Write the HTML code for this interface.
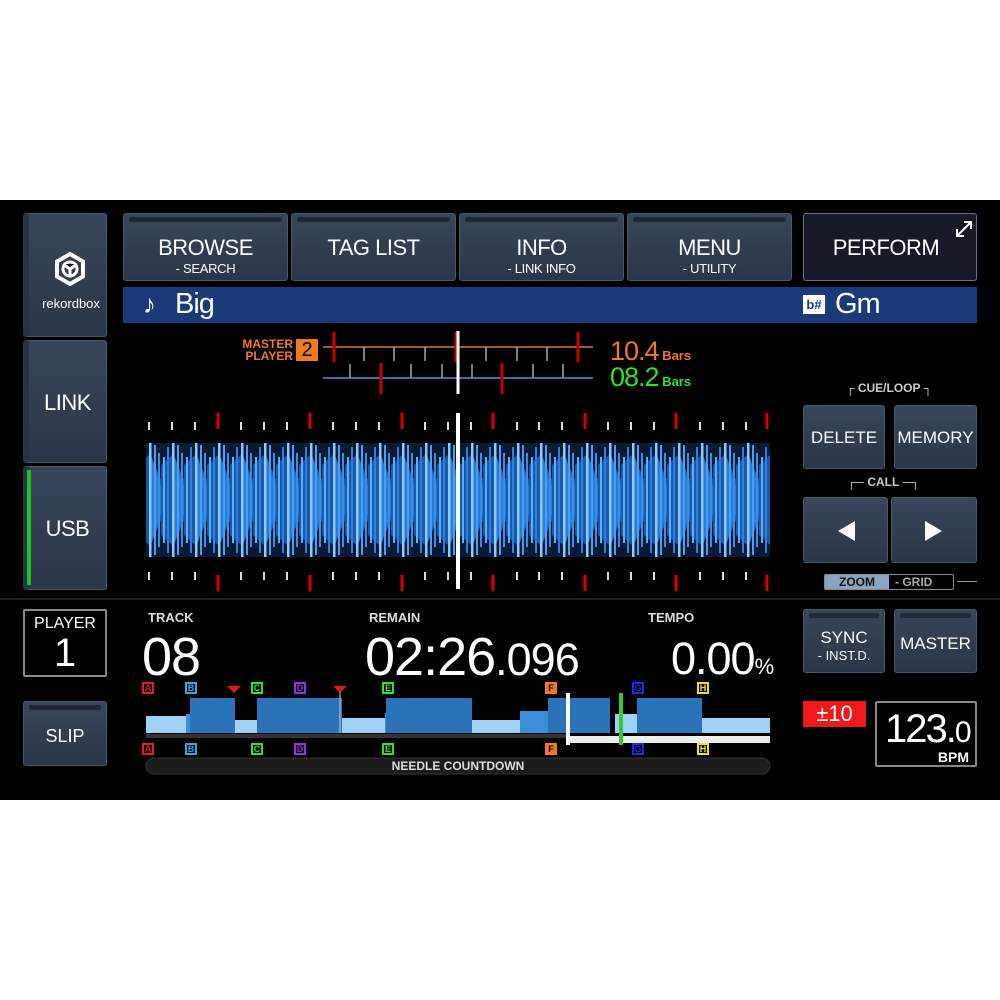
<!DOCTYPE html>
<html><head><meta charset="utf-8">
<style>
*{margin:0;padding:0;box-sizing:border-box}
body{width:1000px;height:1000px;background:#fff;position:relative;overflow:hidden;font-family:"Liberation Sans",sans-serif;color:#fff}
#scr{position:absolute;left:0;top:200px;width:1000px;height:600px;background:#000}
.a{position:absolute}
.btn{position:absolute;background:linear-gradient(#38465b,#2a3649);border:1px solid #4a586c;border-radius:3px;text-align:center;color:#fff}
.btn .hl{position:absolute;left:5px;right:5px;top:3px;height:5px;background:#1e2838;border-radius:2px}
.t{font-size:22px;letter-spacing:-0.5px}
.s{font-size:13px;letter-spacing:-0.3px}
.lbl{position:absolute;font-size:13px;font-weight:bold;color:#ddd}
.big{position:absolute;font-size:54px;font-weight:normal;letter-spacing:-1px;line-height:1}
.mk{position:absolute;width:12px;height:12px;border:2px solid;font-size:9px;font-weight:bold;line-height:8px;text-align:center}
</style></head><body>
<div id="scr"></div>

<div class="btn" style="left:23px;top:213px;width:84px;height:124px;border-left:6px solid #273244">
  <svg class="a" style="left:25px;top:38px" width="32" height="34" viewBox="0 0 32 34"><path d="M16 2 L29 9.5 L29 24.5 L16 32 L3 24.5 L3 9.5 Z" fill="none" stroke="#fff" stroke-width="4"/><circle cx="16" cy="17" r="7" fill="none" stroke="#fff" stroke-width="3"/><path d="M9 12 L16 17 L23 12 M16 17 L16 25" stroke="#fff" stroke-width="3"/></svg>
  <div class="a" style="left:6px;top:82px;width:72px;font-size:13px;text-align:center">rekordbox</div>
</div>
<div class="btn" style="left:23px;top:340px;width:84px;height:123px;border-left:6px solid #273244"><div class="t" style="margin-top:49px">LINK</div></div>
<div class="btn" style="left:23px;top:466px;width:84px;height:124px;border-left:6px solid #273244"><div class="a" style="left:-2px;top:3px;width:4px;height:115px;background:#1ec21e"></div><div class="t" style="margin-top:49px">USB</div></div>

<div class="btn" style="left:123px;top:213px;width:165px;height:68px"><div class="hl"></div><div class="t" style="margin-top:21px">BROWSE</div><div class="s">- SEARCH</div></div>
<div class="btn" style="left:291px;top:213px;width:165px;height:68px"><div class="hl"></div><div class="t" style="margin-top:21px">TAG LIST</div></div>
<div class="btn" style="left:459px;top:213px;width:165px;height:68px"><div class="hl"></div><div class="t" style="margin-top:21px">INFO</div><div class="s">- LINK INFO</div></div>
<div class="btn" style="left:627px;top:213px;width:165px;height:68px"><div class="hl"></div><div class="t" style="margin-top:21px">MENU</div><div class="s">- UTILITY</div></div>
<div class="a" style="left:803px;top:213px;width:174px;height:68px;background:#161a28;border:1px solid #6a6f9a;border-radius:3px;text-align:center"><div class="t" style="margin-top:21px;margin-right:8px">PERFORM</div>
<svg class="a" style="left:150px;top:5px" width="20" height="20" viewBox="0 0 20 20"><path d="M3 17 L17 3 M10 3 L17 3 L17 10 M3 10 L3 17 L10 17" fill="none" stroke="#fff" stroke-width="2"/></svg></div>

<div class="a" style="left:123px;top:287px;width:854px;height:36px;background:#1b3a7a"></div>
<div class="a" style="left:143px;top:289px;font-size:26px">♪</div>
<div class="a" style="left:175px;top:288px;font-size:29px;letter-spacing:-1px">Big</div>
<div class="a" style="left:803px;top:295px;width:22px;height:19px;background:#fff;color:#1b3a7a;font-size:13px;font-weight:bold;text-align:center;line-height:19px">b#</div>
<div class="a" style="left:835px;top:288px;font-size:29px;letter-spacing:-1px">Gm</div>

<div class="a" style="left:236px;top:338px;font-size:12px;font-weight:bold;color:#f07a22;line-height:12px;text-align:right;width:57px">MASTER<br>PLAYER</div>
<div class="a" style="left:296px;top:339px;width:22px;height:22px;background:#f07a22;color:#000;font-size:20px;text-align:center;line-height:22px">2</div>
<svg class="a" style="left:320px;top:328px" width="280" height="70">
<line x1="3" y1="19" x2="273" y2="19" stroke="#a05a36" stroke-width="2"/>
<line x1="3" y1="50" x2="273" y2="50" stroke="#3a6ea8" stroke-width="2"/>
<g stroke="#c00" stroke-width="3"><line x1="14" y1="4" x2="14" y2="34"/><line x1="136" y1="4" x2="136" y2="34"/><line x1="258" y1="4" x2="258" y2="34"/><line x1="61" y1="35" x2="61" y2="66"/><line x1="182" y1="35" x2="182" y2="66"/></g>
<g stroke="#9ab" stroke-width="1.5"><line x1="44" y1="19" x2="44" y2="33"/><line x1="74" y1="19" x2="74" y2="33"/><line x1="105" y1="19" x2="105" y2="33"/><line x1="166" y1="19" x2="166" y2="33"/><line x1="197" y1="19" x2="197" y2="33"/><line x1="227" y1="19" x2="227" y2="33"/>
<line x1="30" y1="36" x2="30" y2="50"/><line x1="91" y1="36" x2="91" y2="50"/><line x1="122" y1="36" x2="122" y2="50"/><line x1="152" y1="36" x2="152" y2="50"/><line x1="213" y1="36" x2="213" y2="50"/><line x1="243" y1="36" x2="243" y2="50"/></g>
<line x1="138" y1="3" x2="138" y2="66" stroke="#fff" stroke-width="3"/>
</svg>
<div class="a" style="left:610px;top:336px;font-size:27px;color:#f07a22;letter-spacing:-1px">10.4<span style="font-size:13px;font-weight:bold;letter-spacing:0"> Bars</span></div>
<div class="a" style="left:610px;top:362px;font-size:27px;color:#2fe02f;letter-spacing:-1px">08.2<span style="font-size:13px;font-weight:bold;letter-spacing:0"> Bars</span></div>

<svg class="a" style="left:140px;top:405px" width="640" height="190">
<defs>
<pattern id="wf" x="9" y="0" width="23" height="190" patternUnits="userSpaceOnUse">
<rect x="0" y="38" width="23" height="114" fill="#0a1a35"/>
<polygon points="-3,38 20,95 -3,152" fill="#1f62b8"/>
<polygon points="0,45 16,95 0,145" fill="#2a7ad8"/>
<polygon points="12,60 23,50 23,140 12,130" fill="#1a58a8"/>
<rect x="0" y="38" width="2.5" height="114" fill="#8ccaff"/>
<rect x="5" y="40" width="2" height="110" fill="#4aa0f0"/>
<rect x="9" y="48" width="2" height="94" fill="#3a8ee8"/>
<rect x="14" y="52" width="2" height="86" fill="#5ab0f8"/>
<rect x="18" y="42" width="2" height="106" fill="#2f7fe0"/>
</pattern>
</defs>
<rect x="6" y="38" width="624" height="114" fill="url(#wf)"/>
<g stroke="#ddd" stroke-width="2">
<path d="M9 17v8M32 17v8M55 17v8M101 17v8M124 17v8M147 17v8M193 17v8M216 17v8M239 17v8M285 17v8M308 17v8M331 17v8M377 17v8M399 17v8M422 17v8M468 17v8M491 17v8M514 17v8M560 17v8M583 17v8M606 17v8"/>
<path d="M9 167v8M32 167v8M55 167v8M101 167v8M124 167v8M147 167v8M193 167v8M216 167v8M239 167v8M285 167v8M308 167v8M331 167v8M377 167v8M399 167v8M422 167v8M468 167v8M491 167v8M514 167v8M560 167v8M583 167v8M606 167v8"/>
</g>
<g stroke="#d00" stroke-width="3">
<path d="M78 8v16M170 8v16M262 8v16M353 8v16M445 8v16M536 8v16M627 8v16"/>
<path d="M78 170v16M170 170v16M262 170v16M353 170v16M445 170v16M536 170v16M627 170v16"/>
</g>
<rect x="316" y="8" width="4" height="176" fill="#fff"/>
</svg>

<div class="a" style="left:846px;top:381px;font-size:12px;font-weight:bold;color:#ccc">┌ CUE/LOOP ┐</div>
<div class="btn" style="left:803px;top:405px;width:82px;height:64px"><div style="margin-top:22px;font-size:17px">DELETE</div></div>
<div class="btn" style="left:894px;top:405px;width:83px;height:64px"><div style="margin-top:22px;font-size:17px">MEMORY</div></div>
<div class="a" style="left:847px;top:475px;font-size:12px;font-weight:bold;color:#ccc">┌─ CALL ─┐</div>
<div class="btn" style="left:803px;top:497px;width:85px;height:66px"><svg style="margin-top:21px" width="20" height="24"><polygon points="2,12 19,2 19,22" fill="#fff"/></svg></div>
<div class="btn" style="left:891px;top:497px;width:86px;height:66px"><svg style="margin-top:21px" width="20" height="24"><polygon points="18,12 1,2 1,22" fill="#fff"/></svg></div>
<div class="a" style="left:824px;top:574px;width:130px;height:16px;border:1px solid #889;border-radius:2px;background:#000;font-size:12px;font-weight:bold;line-height:14px">
<span style="display:inline-block;width:64px;background:#8da4c0;color:#111;text-align:center">ZOOM</span><span style="color:#aaa;padding-left:6px">- GRID</span></div>
<div class="a" style="left:957px;top:581px;width:20px;height:1px;background:#999"></div>

<div class="a" style="left:0;top:598px;width:1000px;height:2px;background:#1a1f28"></div>

<div class="a" style="left:23px;top:609px;width:84px;height:68px;border:2px solid #888;border-radius:2px;text-align:center"><div style="font-size:16px;margin-top:4px">PLAYER</div><div style="font-size:40px;line-height:40px">1</div></div>
<div class="btn" style="left:23px;top:701px;width:84px;height:65px"><div class="hl"></div><div style="margin-top:24px;font-size:18px">SLIP</div></div>

<div class="lbl" style="left:148px;top:610px">TRACK</div>
<div class="big" style="left:142px;top:630px">08</div>
<div class="lbl" style="left:369px;top:610px">REMAIN</div>
<div class="big" style="left:365px;top:630px">02:26<span style="font-size:45px">.096</span></div>
<div class="lbl" style="left:648px;top:610px">TEMPO</div>
<div class="big" style="left:671px;top:636px;font-size:45px">0.00<span style="font-size:22px">%</span></div>

<svg class="a" style="left:140px;top:678px" width="640" height="100">
<g fill="#9fd0f5"><rect x="6" y="38" width="40" height="17"/><rect x="90" y="42" width="30" height="13"/><rect x="200" y="40" width="45" height="15"/><rect x="330" y="42" width="50" height="13"/><rect x="475" y="36" width="60" height="19"/><rect x="560" y="40" width="70" height="15"/></g>
<g fill="#3a8fd8"><rect x="46" y="36" width="45" height="19"/><rect x="120" y="30" width="80" height="25"/><rect x="245" y="35" width="85" height="20"/><rect x="380" y="33" width="30" height="22"/></g>
<g fill="#2a73b8"><rect x="50" y="20" width="45" height="35"/><rect x="117" y="20" width="85" height="35"/><rect x="246" y="20" width="86" height="35"/><rect x="408" y="20" width="62" height="35"/><rect x="497" y="20" width="65" height="35"/></g>
<rect x="6" y="56" width="422" height="4" fill="#333"/>
<rect x="428" y="58" width="202" height="7" fill="#eee"/>
<rect x="426" y="15" width="4" height="52" fill="#fff"/>
<rect x="479" y="15" width="4" height="52" fill="#2ecc2e"/>
<polygon points="87,8 101,8 94,15" fill="#e01818"/><polygon points="193,8 207,8 200,15" fill="#e01818"/>
<line x1="200" y1="14" x2="200" y2="55" stroke="#ccc"/>
<rect x="6" y="80" width="624" height="16" rx="8" fill="#1c1c1c" stroke="#333"/>
<text x="318" y="92" font-family="Liberation Sans" font-size="12" font-weight="bold" fill="#ddd" text-anchor="middle">NEEDLE COUNTDOWN</text>
</svg>
<div class="mk" style="left:142px;top:682px;border-color:#e02020;color:#e02020">A</div>
<div class="mk" style="left:185px;top:682px;border-color:#30a8e0;color:#30a8e0">B</div>
<div class="mk" style="left:251px;top:682px;border-color:#30e030;color:#30e030">C</div>
<div class="mk" style="left:294px;top:682px;border-color:#9030e0;color:#9030e0">D</div>
<div class="mk" style="left:382px;top:682px;border-color:#30e030;color:#30e030">E</div>
<div class="mk" style="left:545px;top:682px;background:#f07a22;border-color:#f07a22;color:#000">F</div>
<div class="mk" style="left:632px;top:682px;border-color:#1830e0;color:#1830e0">G</div>
<div class="mk" style="left:697px;top:682px;border-color:#f0e020;color:#f0e020">H</div>
<div class="mk" style="left:142px;top:743px;border-color:#e02020;color:#e02020">A</div>
<div class="mk" style="left:185px;top:743px;border-color:#30a8e0;color:#30a8e0">B</div>
<div class="mk" style="left:251px;top:743px;border-color:#30e030;color:#30e030">C</div>
<div class="mk" style="left:294px;top:743px;border-color:#9030e0;color:#9030e0">D</div>
<div class="mk" style="left:382px;top:743px;border-color:#30e030;color:#30e030">E</div>
<div class="mk" style="left:545px;top:743px;background:#f07a22;border-color:#f07a22;color:#000">F</div>
<div class="mk" style="left:632px;top:743px;border-color:#1830e0;color:#1830e0">G</div>
<div class="mk" style="left:697px;top:743px;border-color:#f0e020;color:#f0e020">H</div>

<div class="btn" style="left:803px;top:609px;width:82px;height:64px"><div class="hl"></div><div style="margin-top:18px;font-size:17px">SYNC</div><div style="font-size:13px">- INST.D.</div></div>
<div class="btn" style="left:894px;top:609px;width:83px;height:64px"><div class="hl"></div><div style="margin-top:24px;font-size:17px">MASTER</div></div>
<div class="a" style="left:803px;top:701px;width:63px;height:26px;background:#f01818;font-size:22px;text-align:center;line-height:26px">±10</div>
<div class="a" style="left:875px;top:701px;width:102px;height:66px;border:2px solid #888;border-radius:2px">
<div class="a" style="left:8px;top:6px;font-size:40px;letter-spacing:-2px;line-height:40px">123.<span style="font-size:30px">0</span></div>
<div class="a" style="right:6px;top:46px;font-size:14px;font-weight:bold">BPM</div></div>
</body></html>
